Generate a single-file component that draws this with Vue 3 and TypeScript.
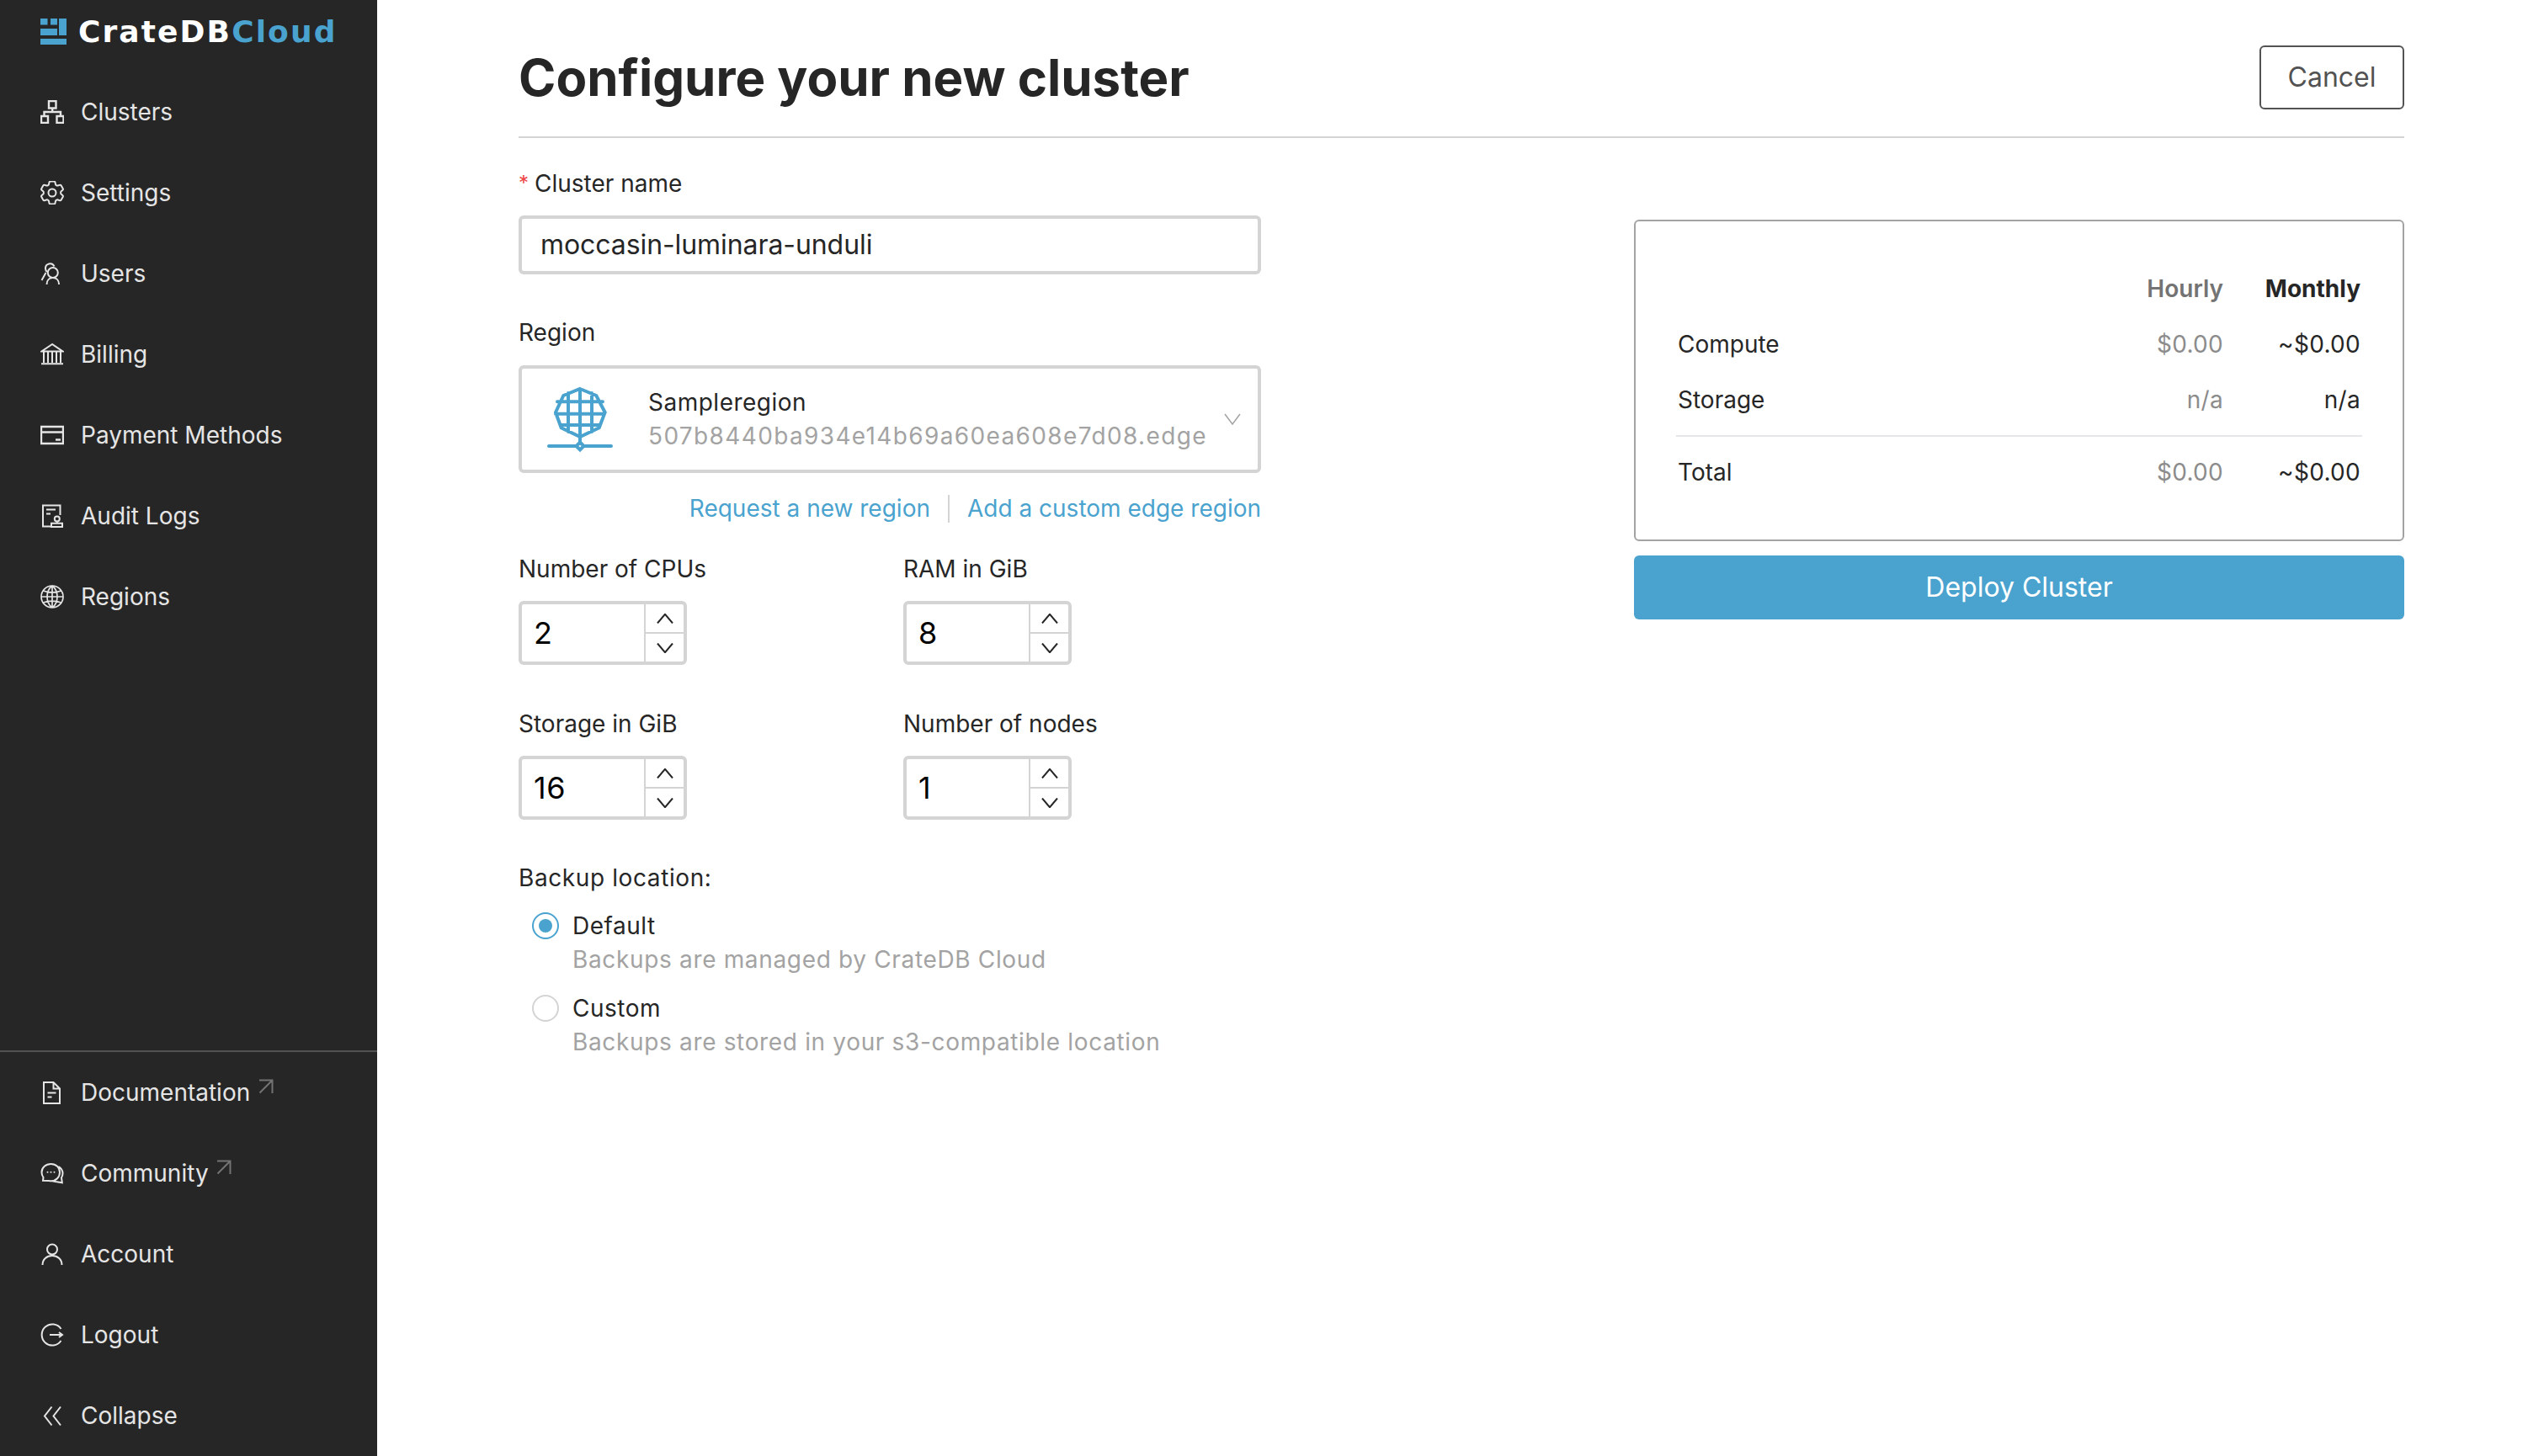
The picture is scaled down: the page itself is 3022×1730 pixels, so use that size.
<script setup lang="ts">
interface NavIcon {
  d: string
  box?: string
  sw?: number
}
interface NavItem {
  label: string
  icon: NavIcon
  external?: boolean
}

const gear =
  'M9.594 3.94c.09-.542.56-.94 1.11-.94h2.593c.55 0 1.02.398 1.11.94l.213 1.281c.063.374.313.686.645.87.074.04.147.083.22.127.325.196.72.257 1.075.124l1.217-.456a1.125 1.125 0 0 1 1.37.49l1.296 2.247a1.125 1.125 0 0 1-.26 1.431l-1.003.827c-.293.241-.438.613-.43.992a7.723 7.723 0 0 1 0 .255c-.008.378.137.75.43.991l1.004.827c.424.35.534.955.26 1.43l-1.298 2.247a1.125 1.125 0 0 1-1.369.491l-1.217-.456c-.355-.133-.75-.072-1.076.124a6.47 6.47 0 0 1-.22.128c-.331.183-.581.495-.644.869l-.213 1.281c-.09.543-.56.94-1.11.94h-2.594c-.55 0-1.019-.398-1.11-.94l-.213-1.281c-.062-.374-.312-.686-.644-.87a6.52 6.52 0 0 1-.22-.127c-.325-.196-.72-.257-1.076-.124l-1.217.456a1.125 1.125 0 0 1-1.369-.49l-1.297-2.247a1.125 1.125 0 0 1 .26-1.431l1.004-.827c.292-.24.437-.613.43-.991a6.932 6.932 0 0 1 0-.255c.007-.38-.138-.751-.43-.992l-1.004-.827a1.125 1.125 0 0 1-.26-1.43l1.297-2.247a1.125 1.125 0 0 1 1.37-.491l1.216.456c.356.133.751.072 1.076-.124.072-.044.146-.086.22-.128.332-.183.582-.495.644-.869l.214-1.28ZM15 12a3 3 0 1 1-6 0 3 3 0 0 1 6 0Z'

const topItems: NavItem[] = [
  {
    label: 'Clusters',
    icon: {
      d: 'M10 1h8.500v8.500H10zM14.200 9.500V14M4.500 19v-5h19.500v5M1 19h8v8H1zM19.500 19h8v8h-8z',
      sw: 2.400,
    },
  },
  { label: 'Settings', icon: { d: gear, box: '2.670 2.670 18.670 18.670', sw: 1.330 } },
  {
    label: 'Users',
    icon: {
      d: 'M20.800 13a6 6 0 1 1-12 0 6 6 0 0 1 12 0ZM7.500 27c0-5 3.200-8 7.300-8s7.300 3 7.300 8M16.500 5.500A5.500 5.500 0 0 0 6 8c0 1.700.7 3 1.800 4M6.500 13L1.500 22',
    },
  },
  {
    label: 'Billing',
    icon: {
      d: 'M14 2 1.500 10.500h25ZM4 11v13M9 11v13M14 11v13M19 11v13M24 11v13M1 25.200h26',
    },
  },
  {
    label: 'Payment Methods',
    icon: {
      d: 'M1 4h26v20H1zM1 10.500h26M18 19.500h6',
      sw: 2.400,
    },
  },
  {
    label: 'Audit Logs',
    icon: {
      d: 'M12 26.500H3V1.500h20.500V13M7 6.500h11M7 11.500h5M22.800 17.500a3 3 0 1 1-6 0 3 3 0 0 1 6 0ZM19.800 20.500v2M13 22.800h13v4.200H13z',
    },
  },
  {
    label: 'Regions',
    icon: {
      d: 'M27 14a13 13 0 1 1-26 0 13 13 0 0 1 26 0ZM14 1v26M1 14h26M14 1c-8 6-8 20 0 26M14 1c8 6 8 20 0 26M3.500 7c6 2.500 15 2.500 21 0M3.500 21c6-2.500 15-2.500 21 0',
      sw: 1.700,
    },
  },
]

const bottomItems: NavItem[] = [
  {
    label: 'Documentation',
    external: true,
    icon: {
      d: 'M4 2h11.500L23 9.500V27H4ZM15.500 2.500V9.500H22.500M8.500 14.500h10M8.500 19.500h5',
    },
  },
  {
    label: 'Community',
    external: true,
    icon: {
      d: 'M12.500 3C6.500 3 1.500 7.200 1.500 13c0 2.400.8 4.400 2 6l-.5 3.800 7.500.3c.7.200 1.400.2 2 .2 6 0 10.500-4.500 10.500-10.300S18.500 3 12.500 3ZM21.500 6c3 1.800 5 4.800 5 8.200 0 2-.6 3.600-1.500 5l.8 6-7.800-1.200-4-.8',
    },
  },
  {
    label: 'Account',
    icon: {
      d: 'M20 8.500a6 6 0 1 1-12 0 6 6 0 0 1 12 0ZM2.500 27c0-6.500 5-11 11.500-11s11.500 4.500 11.500 11',
    },
  },
  {
    label: 'Logout',
    icon: {
      d: 'M24.500 7A12.500 12.500 0 1 0 24.500 21M11 14h14M22 11l4 3-4 3',
    },
  },
  {
    label: 'Collapse',
    icon: {
      d: 'M13.500 3.500 5 14.500 13.500 25.500M24 3.500 15.500 14.500 24 25.500',
    },
  },
]

const numberFields = [
  { label: 'Number of CPUs', value: '2' },
  { label: 'RAM in GiB', value: '8' },
  { label: 'Storage in GiB', value: '16' },
  { label: 'Number of nodes', value: '1' },
]

const costs = [
  { name: 'Compute', hourly: '$0.00', monthly: '~$0.00' },
  { name: 'Storage', hourly: 'n/a', monthly: 'n/a' },
]

const backups = [
  { name: 'Default', hint: 'Backups are managed by CrateDB Cloud', on: true },
  { name: 'Custom', hint: 'Backups are stored in your s3-compatible location', on: false },
]
</script>

<template>
  <div class="app">
    <aside class="sidebar">
      <div class="brand">
        <svg class="brand-mark" viewBox="0 0 31 31" width="31" height="31">
          <rect x="0" y="0" width="8.500" height="7.500" />
          <rect x="12" y="0" width="8" height="7.500" />
          <rect x="22" y="0" width="9" height="20" />
          <rect x="0" y="12" width="20" height="8" />
          <rect x="0" y="24" width="31" height="7" />
        </svg>
        <span class="brand-name">CrateDB<span class="brand-cloud">Cloud</span></span>
      </div>
      <nav class="nav">
        <a v-for="item in topItems" :key="item.label" class="nav-item">
          <svg
            class="nav-icon"
            :viewBox="item.icon.box ?? '0 0 28 28'"
            width="28"
            height="28"
            :stroke-width="item.icon.sw ?? 2"
          >
            <path :d="item.icon.d" />
          </svg>
          <span>{{ item.label }}</span>
        </a>
      </nav>
      <nav class="nav nav-bottom">
        <a v-for="item in bottomItems" :key="item.label" class="nav-item">
          <svg
            class="nav-icon"
            :viewBox="item.icon.box ?? '0 0 28 28'"
            width="28"
            height="28"
            :stroke-width="item.icon.sw ?? 2"
          >
            <path :d="item.icon.d" />
            <circle v-if="item.label === 'Community'" cx="8.500" cy="12.800" r="1" class="dot" />
            <circle v-if="item.label === 'Community'" cx="12.500" cy="12.800" r="1" class="dot" />
            <circle v-if="item.label === 'Community'" cx="16.500" cy="12.800" r="1" class="dot" />
          </svg>
          <span>{{ item.label }}</span>
          <svg v-if="item.external" class="ext" viewBox="0 0 18 18" width="18" height="18">
            <path d="M1 1.500h15.500V17M16.500 1.500 1.500 16.500" />
          </svg>
        </a>
      </nav>
    </aside>

    <main class="main">
      <header class="head">
        <h1 class="title">Configure your new cluster</h1>
        <button class="cancel" type="button">Cancel</button>
      </header>

      <div class="body">
        <form class="form" @submit.prevent>
          <label class="label"><span class="req">*</span>Cluster name</label>
          <div class="text-input">moccasin-luminara-unduli</div>

          <label class="label region-label">Region</label>
          <div class="select">
            <svg class="region-icon" viewBox="0 -2 100 100" width="100" height="100">
              <path
                d="M49 12 68.300 20 78.700 40 71.700 58.300 49 69 26.700 58.300 20 40 29.300 20ZM49 12V69M35 17V63M63 17V63M22 27.300H76M20 41.700H78M26 55H73M49 69V77"
              />
              <path d="M12 80H45M53 80H86M49 75.500 53.500 80 49 84.500 44.500 80Z" />
            </svg>
            <div class="select-text">
              <div class="select-name">Sampleregion</div>
              <div class="select-id">507b8440ba934e14b69a60ea608e7d08.edge</div>
            </div>
            <svg class="select-chev" viewBox="0 0 20 14" width="20" height="14">
              <path d="M1 1 10 13 19 1" />
            </svg>
          </div>

          <div class="links">
            <a class="link">Request a new region</a>
            <span class="link-sep"></span>
            <a class="link">Add a custom edge region</a>
          </div>

          <div class="numbers">
            <div v-for="f in numberFields" :key="f.label" class="number-field">
              <label class="label">{{ f.label }}</label>
              <div class="stepper">
                <div class="stepper-value">{{ f.value }}</div>
                <div class="stepper-handles">
                  <span class="handle">
                    <svg viewBox="0 0 20 12" width="20" height="12"><path d="M1 11.500 10 .8 19 11.500" /></svg>
                  </span>
                  <span class="handle">
                    <svg viewBox="0 0 20 12" width="20" height="12"><path d="M1 .5 10 11.200 19 .5" /></svg>
                  </span>
                </div>
              </div>
            </div>
          </div>

          <label class="label backup-label">Backup location:</label>
          <div class="radios">
            <div v-for="b in backups" :key="b.name" class="radio-row">
              <span class="radio" :class="{ 'radio-on': b.on }"></span>
              <div>
                <div class="radio-name">{{ b.name }}</div>
                <div class="radio-hint">{{ b.hint }}</div>
              </div>
            </div>
          </div>
        </form>

        <section class="summary">
          <div class="card">
            <div class="row row-head">
              <span></span>
              <span class="hourly-head">Hourly</span>
              <span class="monthly-head">Monthly</span>
            </div>
            <div v-for="c in costs" :key="c.name" class="row">
              <span>{{ c.name }}</span>
              <span class="hourly">{{ c.hourly }}</span>
              <span class="monthly">{{ c.monthly }}</span>
            </div>
            <div class="rule"></div>
            <div class="row">
              <span>Total</span>
              <span class="hourly">$0.00</span>
              <span class="monthly">~$0.00</span>
            </div>
          </div>
          <button class="deploy" type="button">Deploy Cluster</button>
        </section>
      </div>
    </main>
  </div>
</template>

<style>
html,
body {
  margin: 0;
  background: #fff;
}
</style>

<style scoped>
.app {
  display: flex;
  width: 3022px;
  height: 1730px;
  overflow: hidden;
  font-family: Inter, "Liberation Sans", sans-serif;
  font-size: 28px;
  color: #262626;
  background: #fff;
}

.sidebar {
  display: flex;
  flex-direction: column;
  flex: 0 0 448px;
  background: #262626;
  color: #e5e5e5;
}

.brand {
  display: flex;
  align-items: center;
  gap: 14px;
  box-sizing: border-box;
  height: 85px;
  padding: 0 0 10px 48px;
}

.brand-mark {
  fill: #4aa3cf;
  flex: none;
}

.brand-name {
  font-family: "DejaVu Sans", Inter, sans-serif;
  font-size: 36px;
  font-weight: 700;
  letter-spacing: 2.1px;
  line-height: 1;
  color: #fff;
}

.brand-cloud {
  color: #4aa3cf;
}

.nav {
  display: flex;
  flex-direction: column;
}

.nav-bottom {
  margin-top: auto;
  border-top: 2px solid #525252;
}

.nav-item {
  display: flex;
  align-items: center;
  gap: 20px;
  height: 96px;
  padding-left: 48px;
  line-height: 40px;
}

.nav-icon {
  flex: none;
  fill: none;
  stroke: #e5e5e5;
}

.dot {
  fill: #e5e5e5;
  stroke: none;
}

.ext {
  flex: none;
  margin: 0 0 14px -10.500px;
  fill: none;
  stroke: #737373;
  stroke-width: 2;
}

.main {
  flex: 1;
  min-width: 0;
  padding: 0 166px 0 168px;
}

.head {
  display: flex;
  justify-content: space-between;
  align-items: center;
  padding: 54px 0 32px;
  border-bottom: 2px solid #d4d4d4;
}

.title {
  margin: 0;
  font-size: 60px;
  line-height: 76px;
  font-weight: 700;
  color: #262626;
}

.cancel {
  box-sizing: border-box;
  width: 172px;
  height: 76px;
  padding: 0 0 2px;
  border: 2px solid #525252;
  border-radius: 6px;
  background: #fff;
  font: inherit;
  font-size: 32px;
  color: #525252;
}

.body {
  display: flex;
  justify-content: space-between;
  align-items: flex-start;
}

.form {
  width: 882px;
  padding-top: 32px;
}

.label {
  display: block;
  line-height: 44px;
  margin-bottom: 16px;
  color: #262626;
}

.req {
  display: inline-block;
  width: 19px;
  color: #ef4444;
  font-size: 24px;
  vertical-align: 2px;
}

.text-input {
  box-sizing: border-box;
  height: 70px;
  padding: 0 22px;
  border: 4px solid #d4d4d4;
  border-radius: 6px;
  font-size: 32px;
  line-height: 62px;
  letter-spacing: -0.08px;
  color: #262626;
}

.region-label {
  margin: 47px 0 17px;
}

.select {
  display: flex;
  align-items: center;
  box-sizing: border-box;
  height: 128px;
  padding: 0 20px;
  border: 4px solid #d4d4d4;
  border-radius: 6px;
}

.region-icon {
  flex: none;
  fill: none;
  stroke: #4aa3cf;
  stroke-width: 4;
  stroke-linecap: round;
}

.select-text {
  flex: 1;
  margin-left: 30px;
  min-width: 0;
}

.select-name {
  line-height: 40px;
  letter-spacing: 0.5px;
}

.select-id {
  line-height: 40px;
  color: #a3a3a3;
  letter-spacing: 1.36px;
}

.select-chev {
  flex: none;
  fill: none;
  stroke: #a3a3a3;
  stroke-width: 1.500;
}

.links {
  display: flex;
  justify-content: flex-end;
  align-items: center;
  height: 44px;
  margin-top: 20px;
  gap: 21px;
}

.link {
  color: #4aa3cf;
}

.link-sep {
  width: 2px;
  height: 33px;
  background: #d4d4d4;
}

.numbers {
  display: grid;
  grid-template-columns: 457px 200px;
  row-gap: 48px;
  margin-top: 28px;
}

.number-field .label {
  white-space: nowrap;
}

.stepper {
  display: flex;
  box-sizing: border-box;
  width: 200px;
  height: 76px;
  border: 4px solid #d4d4d4;
  border-radius: 6px;
}

.stepper-value {
  flex: 1;
  padding-left: 14px;
  font-size: 36px;
  letter-spacing: 0.6px;
  line-height: 68px;
  color: #000;
}

.stepper-handles {
  display: flex;
  flex-direction: column;
  flex: 0 0 45px;
  border-left: 2px solid #d4d4d4;
}

.handle {
  display: flex;
  flex: 1;
  align-items: center;
  justify-content: center;
}

.handle + .handle {
  border-top: 2px solid #d4d4d4;
}

.handle svg {
  fill: none;
  stroke: #262626;
  stroke-width: 2;
}

.backup-label {
  margin: 47px 0 15px;
  letter-spacing: 0.6px;
}

.radios {
  display: flex;
  flex-direction: column;
  gap: 18px;
  padding-left: 16px;
}

.radio-row {
  display: flex;
  gap: 16px;
  align-items: flex-start;
  line-height: 40px;
  letter-spacing: 0.66px;
}

.radio-name {
  letter-spacing: 0.5px;
}

.radio {
  position: relative;
  box-sizing: border-box;
  flex: none;
  width: 32px;
  height: 32px;
  margin-top: 4px;
  border: 2px solid #d4d4d4;
  border-radius: 50%;
}

.radio-on {
  border-color: #4aa3cf;
}

.radio-on::after {
  content: "";
  position: absolute;
  inset: 6px;
  border-radius: 50%;
  background: #4aa3cf;
}

.radio-hint {
  color: #a3a3a3;
}

.summary {
  width: 915px;
  padding-top: 97px;
}

.card {
  box-sizing: border-box;
  height: 382px;
  padding: 47px 48px;
  border: 2px solid #a3a3a3;
  border-radius: 6px;
}

.row {
  display: grid;
  grid-template-columns: 1fr 160px 163px;
  align-items: center;
  height: 66px;
  padding: 0 2px;
}

.row-head {
  font-weight: 600;
}

.hourly,
.hourly-head,
.monthly,
.monthly-head {
  text-align: right;
}

.hourly,
.monthly {
  letter-spacing: 0.3px;
}

.hourly {
  color: #8c8c8c;
}

.hourly-head {
  color: #737373;
}

.monthly-head {
  color: #262626;
  font-weight: 700;
}

.rule {
  height: 2px;
  margin: 9px 0;
  background: #e5e5ea;
}

.deploy {
  display: block;
  width: 100%;
  height: 76px;
  margin-top: 17px;
  padding: 0 0 2px;
  border: 0;
  border-radius: 6px;
  background: #4aa3cf;
  font: inherit;
  font-size: 32px;
  color: #fff;
}
</style>
